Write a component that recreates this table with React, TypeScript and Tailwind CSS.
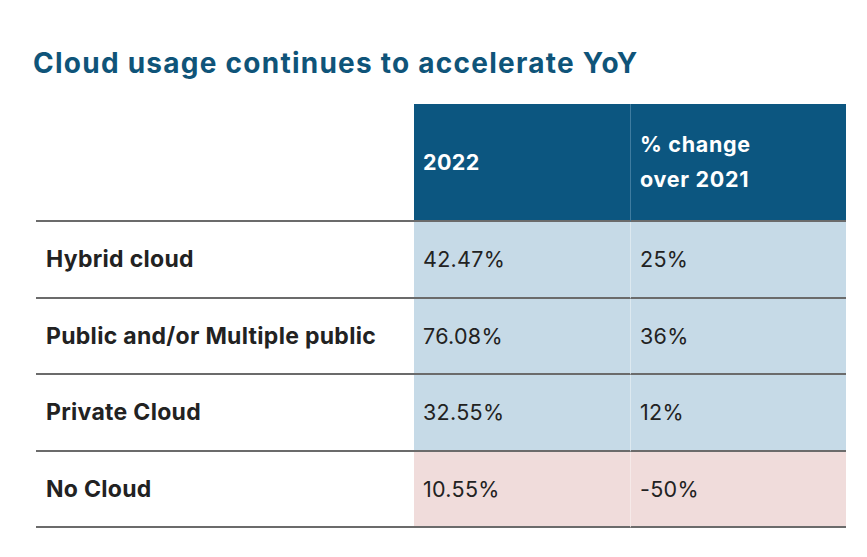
import React from 'react';

const rows = [
  { label: 'Hybrid cloud', value: '42.47%', change: '25%', tone: 'bg-[#c6dae7]' },
  { label: 'Public and/or Multiple public', value: '76.08%', change: '36%', tone: 'bg-[#c6dae7]' },
  { label: 'Private Cloud', value: '32.55%', change: '12%', tone: 'bg-[#c6dae7]' },
  { label: 'No Cloud', value: '10.55%', change: '-50%', tone: 'bg-[#f0dcdb]' },
];

const App: React.FC = () => {
  return (
    <div className="w-[867px] h-[557px] bg-white pt-[45px] font-['Inter','Liberation_Sans',sans-serif]">
      <div className="ml-[36px] w-[810px]">
        <h1 className="-ml-[3px] h-[36px] text-[28px] leading-[36px] tracking-[1.25px] font-bold text-[#0f5479]">
          Cloud usage continues to accelerate YoY
        </h1>

        <div className="mt-[23px] grid grid-cols-[378px_216px_216px]">
          {/* header */}
          <div className="h-[118px] border-b-2 border-[#6b6b6b]" />
          <div className="h-[118px] border-b-2 border-[#6b6b6b] bg-[#0c5680] flex items-center pl-[9px] text-[21.5px] tracking-[0.4px] font-bold text-white">
            2022
          </div>
          <div className="h-[118px] border-b-2 border-[#6b6b6b] border-l border-l-[#3f7ca0] bg-[#0c5680] flex items-center pl-[9px] text-[21.5px] leading-[35px] tracking-[0.7px] font-bold text-white">
            <span>
              % change
              <br />
              over 2021
            </span>
          </div>

          {rows.map((r) => (
            <React.Fragment key={r.label}>
              <div className="h-[76.5px] border-b-2 border-[#6b6b6b] flex items-center pl-[10px] text-[23px] tracking-[0.3px] font-bold text-[#222]">
                {r.label}
              </div>
              <div className={`h-[76.5px] border-b-2 border-[#6b6b6b] ${r.tone} flex items-center pl-[9px] text-[21.5px] tracking-[0.3px] text-[#222]`}>
                {r.value}
              </div>
              <div className={`h-[76.5px] border-b-2 border-[#6b6b6b] border-l border-l-white/40 ${r.tone} flex items-center pl-[9px] text-[21.5px] tracking-[0.3px] text-[#222]`}>
                {r.change}
              </div>
            </React.Fragment>
          ))}
        </div>
      </div>
    </div>
  );
};

export default App;
